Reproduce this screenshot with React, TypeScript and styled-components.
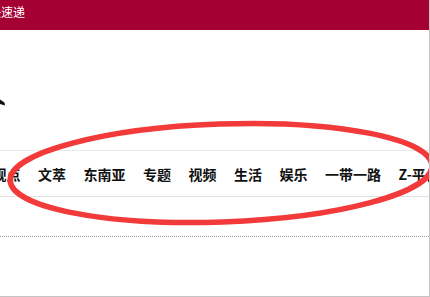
import React from "react";
import styled, { createGlobalStyle } from "styled-components";

const Global = createGlobalStyle`
  html, body { margin: 0; padding: 0; background: #ffffff; }
  body { font-family: "Noto Sans CJK SC", "Noto Sans", sans-serif; }
`;

const Frame = styled.div`
  position: relative;
  width: 430px;
  height: 297px;
  box-sizing: border-box;
  border-right: 1px solid #c4c4c4;
  border-bottom: 1px solid #c4c4c4;
  overflow: hidden;
  background: #ffffff;
`;

const TopBar = styled.div`
  height: 30px;
  background: #a50034;
  display: flex;
  align-items: flex-start;
  padding-top: 4px;
  box-sizing: border-box;
  overflow: hidden;
`;

const TopText = styled.span`
  margin-left: -11px;
  color: #ffffff;
  font-size: 12px;
  line-height: 16px;
  white-space: nowrap;
`;

const Header = styled.div`
  height: 120px;
  display: flex;
  align-items: flex-start;
  padding-top: 69px;
  box-sizing: border-box;
`;

const Nav = styled.nav`
  height: 47px;
  box-sizing: border-box;
  border-top: 1px solid #e8e8e8;
  border-bottom: 1px solid #e2e2e2;
  display: flex;
  align-items: center;
  gap: 17.5px;
  margin-left: -7.5px;
  white-space: nowrap;
`;

const NavItem = styled.a`
  font-size: 14px;
  font-weight: 700;
  color: #111111;
  text-decoration: none;
  line-height: 20px;
  flex: none;
`;

const Dotted = styled.div`
  margin-top: 39px;
  border-top: 1px dotted #9a9a9a;
`;

const Annotation = styled.svg`
  position: absolute;
  left: 0;
  top: 0;
  pointer-events: none;
`;

const items = ["观点", "文萃", "东南亚", "专题", "视频", "生活", "娱乐", "一带一路", "Z-平台"];

export default function App() {
  return (
    <>
      <Global />
      <Frame>
        <TopBar>
          <TopText>快速递</TopText>
        </TopBar>
        <Header>
          <svg width="8" height="10" viewBox="0 0 8 10">
            <path d="M0 0.5 L4.5 3.5 L5 6.5 L0 5 Z" fill="#111" />
          </svg>
        </Header>
        <Nav>
          {items.map((t) => (
            <NavItem key={t}>{t}</NavItem>
          ))}
        </Nav>
        <Dotted />
        <Annotation width="430" height="297" viewBox="0 0 430 297">
          <ellipse
            cx="221"
            cy="173"
            rx="211"
            ry="49"
            transform="rotate(-2 221 173)"
            fill="none"
            stroke="#f23a3a"
            strokeWidth="5.5"
          />
        </Annotation>
      </Frame>
    </>
  );
}
